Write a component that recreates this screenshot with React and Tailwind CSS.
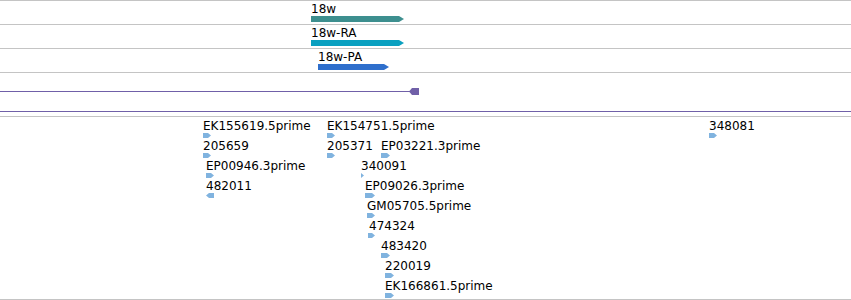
import React from "react";

const Arrow = ({ x, y, w = 8, h = 5, left = false }) => {
  const pts = left
    ? `0,${h / 2} 3,0 ${w},0 ${w},${h} 3,${h}`
    : `0,0 ${w - 3},0 ${w},${h / 2} ${w - 3},${h} 0,${h}`;
  return (
    <svg
      className="absolute"
      style={{ left: x, top: y }}
      width={w}
      height={h}
      viewBox={`0 0 ${w} ${h}`}
    >
      <polygon points={pts} fill="#80b3df" />
    </svg>
  );
};

const Label = ({ x, y, children }) => (
  <div className="absolute whitespace-nowrap" style={{ left: x, top: y }}>
    {children}
  </div>
);

const Bar = ({ x, w, color, top }) => (
  <svg
    className="absolute"
    style={{ left: x, top }}
    width={w}
    height={6}
    viewBox={`0 0 ${w} 6`}
  >
    <polygon points={`0,0 ${w - 5},0 ${w},3 ${w - 5},6 0,6`} fill={color} />
  </svg>
);

// features: [label, labelX, row, arrowX, arrowW, left]
const feats = [
  ["EK155619.5prime", 203, 0, 203, 8],
  ["205659", 203, 1, 203, 8],
  ["EP00946.3prime", 206, 2, 206, 8],
  ["482011", 206, 3, 206, 8, true],
  ["EK154751.5prime", 327, 0, 327, 8],
  ["205371", 327, 1, 327, 8],
  ["EP03221.3prime", 381, 1, 381, 9],
  ["340091", 361, 2, 361, 3],
  ["EP09026.3prime", 365, 3, 365, 10],
  ["GM05705.5prime", 367, 4, 367, 8],
  ["474324", 369, 5, 368, 7],
  ["483420", 381, 6, 381, 9],
  ["220019", 385, 7, 385, 9],
  ["EK166861.5prime", 385, 8, 385, 9],
  ["348081", 709, 0, 709, 8],
];

export default function App() {
  return (
    <div className="w-[851px] h-[300px] bg-white text-black text-[12px] leading-none font-['DejaVu_Sans',sans-serif] overflow-hidden">
      <div className="relative h-[24px] border-t border-[#c4c4c4]">
        <Label x={311} y={2}>18w</Label>
        <Bar x={311} w={93} color="#3d8f8f" top={15} />
      </div>
      <div className="relative h-[24px] border-t border-[#c4c4c4]">
        <Label x={311} y={2}>18w-RA</Label>
        <Bar x={311} w={93} color="#0aa0c0" top={15} />
      </div>
      <div className="relative h-[24px] border-t border-[#c4c4c4]">
        <Label x={318} y={2}>18w-PA</Label>
        <Bar x={318} w={71} color="#2f6fcc" top={15} />
      </div>
      <div className="relative h-[39px] border-t border-[#c4c4c4]">
        <div className="absolute left-0 top-[18px] w-[412px] h-px bg-[#7060a8]" />
        <svg className="absolute left-[409px] top-[15px]" width="10" height="7" viewBox="0 0 10 7">
          <polygon points="0,3.5 3,0 10,0 10,7 3,7" fill="#7060a8" />
        </svg>
      </div>
      <div className="h-[5px] border-t border-[#7060a8]" />
      <div className="relative h-[184px] border-y border-[#c4c4c4]">
        {feats.map(([label, lx, row, ax, aw, left], i) => (
          <React.Fragment key={i}>
            <Label x={lx} y={3 + row * 20}>{label}</Label>
            <Arrow x={ax} y={16 + row * 20} w={aw} left={left} />
          </React.Fragment>
        ))}
      </div>
    </div>
  );
}
